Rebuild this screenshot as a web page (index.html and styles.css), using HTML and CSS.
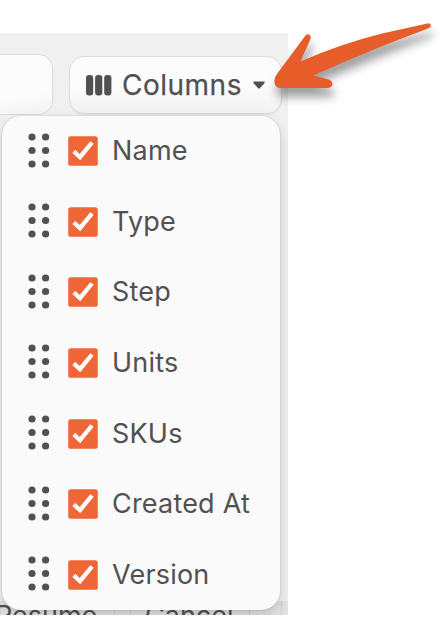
FILE: index.html
```
<!DOCTYPE html>
<html lang="en">
<head>
<meta charset="utf-8">
<title>Columns</title>
<link rel="stylesheet" href="styles.css">
</head>
<body>
<svg width="0" height="0" class="defs">
  <symbol id="grip" viewBox="0 0 22 36"><g fill="#515151"><circle cx="4" cy="4" r="3.6"/><circle cx="17.6" cy="4" r="3.6"/><circle cx="4" cy="17.5" r="3.6"/><circle cx="17.6" cy="17.5" r="3.6"/><circle cx="4" cy="31" r="3.6"/><circle cx="17.6" cy="31" r="3.6"/></g></symbol>
  <symbol id="check" viewBox="0 0 30 30"><rect x=".2" y=".2" width="29.6" height="29.6" rx="2.6" fill="#ef6637"/><path d="M5.8 15.4 12 21.2 24 6.5" fill="none" stroke="#fff" stroke-width="4.3"/></symbol>
</svg>
<main class="app">
  <div class="toolbar">
    <div class="search"></div>
    <button class="columns-button">
      <svg class="bars" width="26" height="22" viewBox="0 0 26 22"><g fill="#515151"><rect x="0" y="0" width="7.2" height="20.5" rx="3"/><rect x="9.1" y="0" width="7.2" height="20.5" rx="3"/><rect x="18.2" y="0" width="7.2" height="20.5" rx="3"/></g></svg>
      <span class="button-label">Columns</span>
      <svg class="caret" width="12" height="8" viewBox="0 0 12 8"><path d="M1 .5h10q1 .2.6 1.4L7 7.2q-1 .8-2 0L.4 1.9Q0 .7 1 .5Z" fill="#515151"/></svg>
    </button>
  </div>
  <div class="actions"><span class="action">Resume</span><span class="action cancel">Cancel</span><span class="action last"></span></div>
  <ul class="menu">
    <li><svg class="grip"><use href="#grip"/></svg><svg class="check"><use href="#check"/></svg><span>Name</span></li>
    <li><svg class="grip"><use href="#grip"/></svg><svg class="check"><use href="#check"/></svg><span>Type</span></li>
    <li><svg class="grip"><use href="#grip"/></svg><svg class="check"><use href="#check"/></svg><span>Step</span></li>
    <li><svg class="grip"><use href="#grip"/></svg><svg class="check"><use href="#check"/></svg><span>Units</span></li>
    <li><svg class="grip"><use href="#grip"/></svg><svg class="check"><use href="#check"/></svg><span>SKUs</span></li>
    <li><svg class="grip"><use href="#grip"/></svg><svg class="check"><use href="#check"/></svg><span>Created At</span></li>
    <li><svg class="grip"><use href="#grip"/></svg><svg class="check"><use href="#check"/></svg><span>Version</span></li>
  </ul>
</main>
<svg class="arrow" width="184" height="130" viewBox="0 0 184 130"><path d="M45.5 35.5Q48 33 50.2 35.5Q51.5 37 50 40L40.5 61.5Q80 44 122 33.5L167.5 23.4Q170.5 23 171 25.5Q171 27.5 168 28.5Q115 48 53 75.5L65 78.5Q73 80 72.5 84Q72 88 67 88H20Q14.5 87.5 14.3 81Q14.5 77 18 72.5Z" fill="#e65d29"/></svg>
</body>
</html>
```
FILE: styles.css
```
* { box-sizing: border-box; }
body {
  margin: 0;
  width: 444px;
  height: 618px;
  padding-top: 33px;
  position: relative;
  overflow: hidden;
  background: #fff;
  color: #515151;
  font: 400 27px/34px Inter, "Liberation Sans", sans-serif;
}
.defs { position: absolute; }
.app {
  position: relative;
  width: 288px;
  height: 582px;
  overflow: hidden;
  background: #f0f0f0;
  display: flex;
  flex-direction: column;
  justify-content: space-between;
}
.toolbar {
  display: flex;
  align-items: center;
  gap: 16px;
  padding-top: 21px;
}
.search {
  width: 53px;
  height: 61px;
  border: 1px solid #dbdbdb;
  border-left: 0;
  border-radius: 0 15px 15px 0;
  background: linear-gradient(170deg, #fcfcfc 65%, #f2f2f2);
}
.columns-button {
  width: 213px;
  height: 58px;
  padding: 0 16px 0 16px;
  display: flex;
  align-items: center;
  border: 1px solid #dbdbdb;
  border-radius: 15px;
  background: linear-gradient(#fcfcfc 50%, #f2f2f2);
  box-shadow: 0 1px 1px #00000012;
  color: inherit;
  font: inherit;
}
.bars { flex: none; margin-top: 2px; }
.button-label {
  margin-left: 10px;
  font-size: 28px;
  letter-spacing: .5px;
  -webkit-text-stroke: .25px #515151;
}
.caret { flex: none; margin-left: auto; margin-top: 1px; }
.actions {
  display: flex;
  height: 14px;
  overflow: hidden;
  background: #e3e3e3;
  white-space: nowrap;
}
.action {
  width: 115px;
  flex: none;
  border-right: 1px solid #cfcfcf;
  text-indent: -5px;
  line-height: 29px;
}
.cancel {
  width: 120px;
  margin-left: 15px;
  border-left: 1px solid #cfcfcf;
  text-indent: 14px;
}
.last { width: 32px; }
.menu {
  position: absolute;
  left: 2px;
  top: 83px;
  width: 278px;
  height: 494px;
  margin: 0;
  padding: 0;
  display: grid;
  grid-template-rows: repeat(7, 1fr);
  list-style: none;
  border-radius: 19px;
  background: #fafafa;
  box-shadow: 0 0 2px #00000030, 0 6px 14px #00000026;
}
.menu li {
  display: flex;
  align-items: center;
  padding-left: 26px;
  letter-spacing: .2px;
}
.grip { width: 22px; height: 36px; margin-top: -1px; }
.check { width: 30px; height: 30px; margin: 0 14px 0 18px; }
.arrow {
  position: absolute;
  left: 260px;
  top: 0;
  filter: drop-shadow(2px 9px 5px #00000060);
}
```
